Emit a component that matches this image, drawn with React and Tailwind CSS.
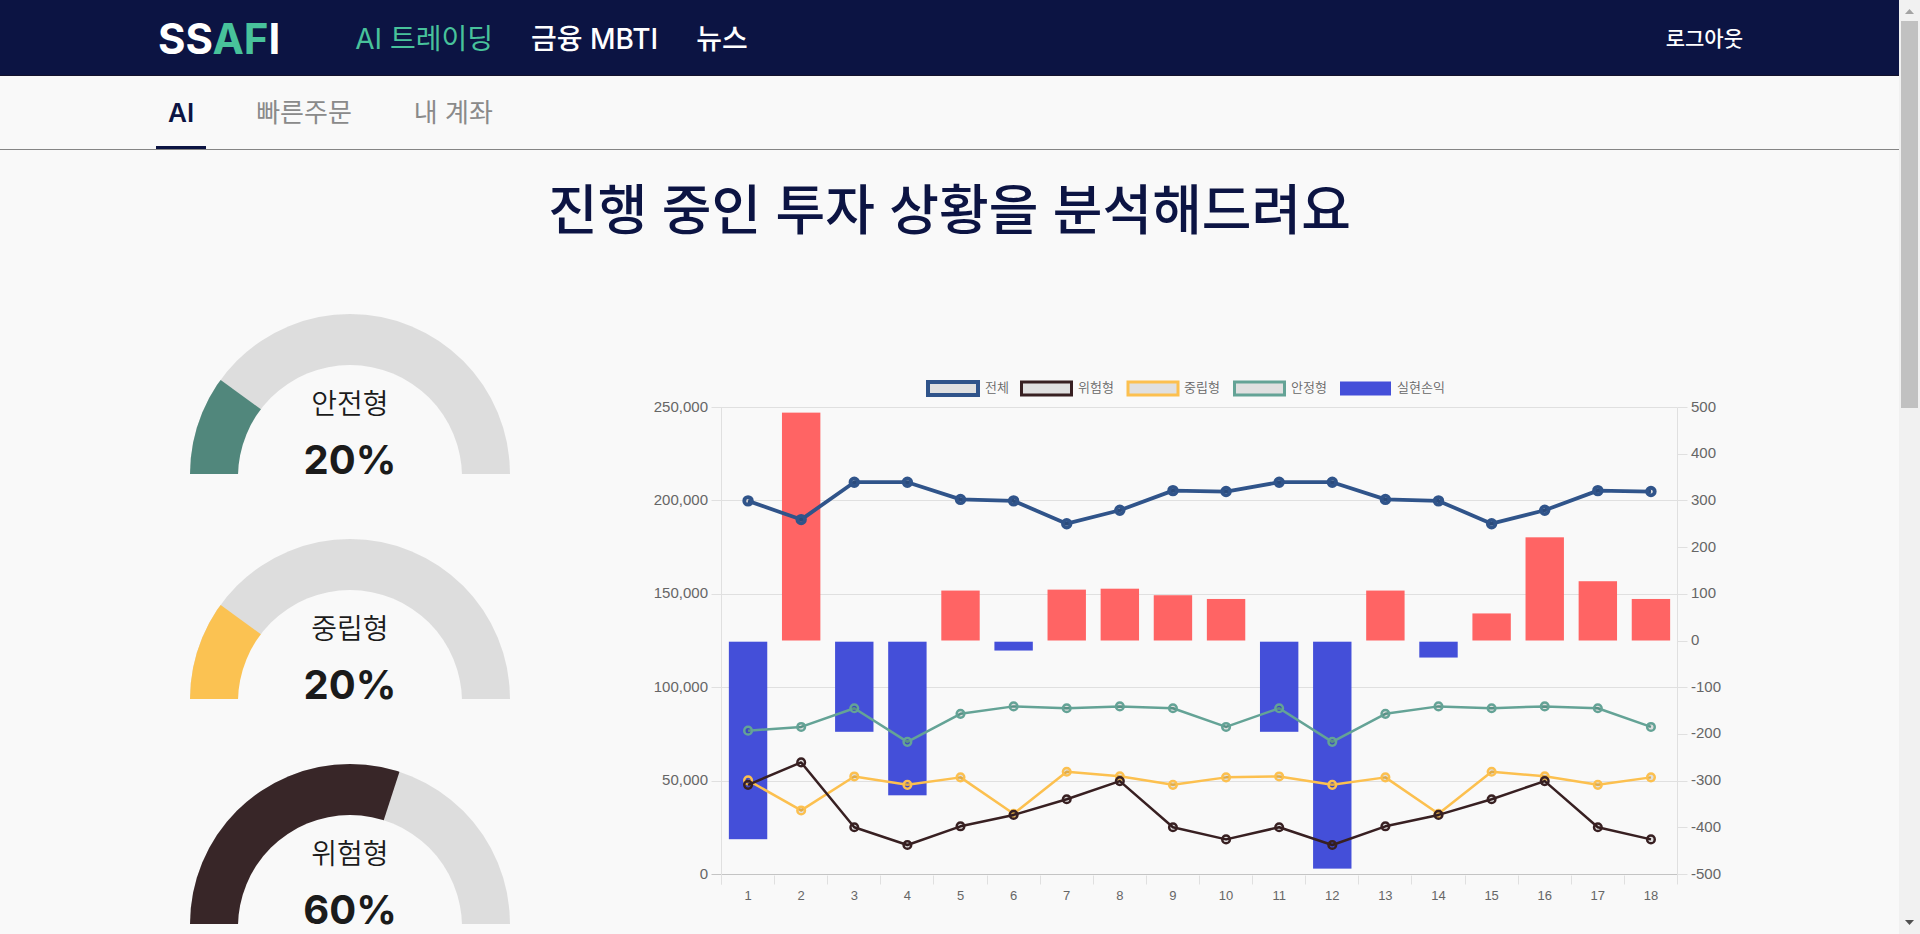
import React from "react";

const NAV = [
  { label: "AI 트레이딩", active: true },
  { label: "금융 MBTI", active: false },
  { label: "뉴스", active: false },
];

const TABS = [
  { label: "AI", active: true },
  { label: "빠른주문", active: false },
  { label: "내 계좌", active: false },
];

const GAUGES = [
  { label: "안전형", percent: 20, color: "#51877c" },
  { label: "중립형", percent: 20, color: "#fbc252" },
  { label: "위험형", percent: 60, color: "#382628" },
];

const LINES = [
  {
    label: "안정형",
    color: "#64a396",
    width: 3,
    data: [77, 79, 89, 71, 86, 90, 89, 90, 89, 79, 89, 71, 86, 90, 89, 90, 89, 79],
  },
  {
    label: "중립형",
    color: "#fcc04f",
    width: 3,
    data: [50.4, 34.3, 52.5, 48, 52, 32.5, 55, 52.6, 48, 52, 52.5, 48, 52, 32.5, 55, 52.6, 48, 52],
  },
  {
    label: "위험형",
    color: "#382022",
    width: 3,
    data: [48, 60, 25.3, 15.8, 25.8, 31.9, 40.3, 50, 25.3, 18.8, 25.3, 15.8, 25.8, 31.9, 40.3, 50, 25.3, 18.8],
  },
  {
    label: "전체",
    color: "#30548a",
    width: 4,
    data: [200, 190, 210, 210, 200.8, 200, 187.8, 195, 205.5, 205, 210, 210, 200.8, 200, 187.8, 195, 205.5, 205],
  },
];

const PROFITS = [-424, 489, -194, -330, 108, -20, 110, 112, 98, 90, -194, -487, 108, -35, 59, 222, 128, 90];

const LEGEND = [
  { label: "전체", x: 288, textX: 345, color: "#30548a", fill: "#e0e0e0", stroke: 4 },
  { label: "위험형", x: 381.5, textX: 438, color: "#382022", fill: "#e0e0e0", stroke: 3 },
  { label: "중립형", x: 488, textX: 544, color: "#fcc04f", fill: "#e0e0e0", stroke: 3 },
  { label: "안정형", x: 594.5, textX: 651, color: "#64a396", fill: "#e0e0e0", stroke: 3 },
  { label: "실현손익", x: 700.5, textX: 757, color: "#444fd9", fill: "#444fd9", stroke: 1 },
];

const PLOT = { left: 81.5, right: 1037.5, top: 37.5, bottom: 504.5 };
const STEP = (PLOT.right - PLOT.left) / 18;
const HEIGHT = PLOT.bottom - PLOT.top;
const ZERO = PLOT.top + HEIGHT / 2;

const xAt = (i) => PLOT.left + STEP * (i + 0.5);
const yAt = (v) => PLOT.bottom - (v / 250) * HEIGHT;
const crisp = (v) => Math.floor(v) + 0.5;

function Gauge({ label, percent, color }) {
  const angle = Math.PI * (1 - percent / 100);
  const x = 160 + 170 * Math.cos(angle);
  const y = 160 - 170 * Math.sin(angle);
  const id = `ring-${label}`;
  return (
    <div className="grid w-[320px] justify-items-center">
      <svg viewBox="0 0 320 160" className="col-start-1 row-start-1 h-40 w-full" aria-hidden="true">
        <clipPath id={id}>
          <path d="M0 160A160 160 0 0 1 320 160Z" />
        </clipPath>
        <g clipPath={`url(#${id})`}>
          <rect width="320" height="160" fill="#dddddd" />
          <path d={`M160 160L-10 160A170 170 0 0 1 ${x} ${y}Z`} fill={color} />
          <circle cx="160" cy="163" r="112" fill="#f9f9f9" />
        </g>
      </svg>
      <div className="col-start-1 row-start-1 flex flex-col items-center pt-[70px] text-[#1b1b1b]">
        <h2 className="text-[28px] leading-[40px] font-[350]">{label}</h2>
        <p className="pt-[22px] text-[40px] leading-[28px] font-bold">{percent}%</p>
      </div>
    </div>
  );
}

function ProfitChart() {
  return (
    <svg
      viewBox="0 0 1103 540"
      className="w-full"
      role="img"
      aria-label="투자 성향별 수익 차트"
      fontFamily='"Liberation Sans", "Noto Sans CJK KR", sans-serif'
      fill="#666666"
    >
      {LEGEND.map((l) => (
        <g key={l.label}>
          <rect x={l.x} y="12" width="50" height="13" fill={l.fill} stroke={l.color} strokeWidth={l.stroke} />
          <text x={l.textX} y="22" fontSize="13" className="font-[350]">
            {l.label}
          </text>
        </g>
      ))}

      {[250, 200, 150, 100, 50, 0].map((v) => (
        <g key={v}>
          <line
            x1={PLOT.left - 10}
            x2={PLOT.right}
            y1={crisp(yAt(v))}
            y2={crisp(yAt(v))}
            stroke={v === 0 ? "#c4c4c4" : "#e0e0e0"}
          />
          <text x="68" y={Math.round(yAt(v) + 4)} fontSize="15" textAnchor="end">
            {v === 0 ? "0" : `${v},000`}
          </text>
        </g>
      ))}

      {[500, 400, 300, 200, 100, 0, -100, -200, -300, -400, -500].map((v) => {
        const y = ZERO - (v / 1000) * HEIGHT;
        return (
          <g key={v}>
            <line x1={PLOT.right} x2={PLOT.right + 10} y1={crisp(y)} y2={crisp(y)} stroke="#e0e0e0" />
            <text x="1051" y={Math.round(y + 4)} fontSize="15">
              {v}
            </text>
          </g>
        );
      })}

      <line x1={PLOT.left} x2={PLOT.left} y1={PLOT.top} y2={PLOT.bottom + 10} stroke="#e0e0e0" />
      <line x1={PLOT.right} x2={PLOT.right} y1={PLOT.top} y2={PLOT.bottom + 10} stroke="#e0e0e0" />

      {PROFITS.map((v, i) => {
        const size = (Math.abs(v) / 1000) * HEIGHT;
        return (
          <g key={i}>
            <line
              x1={crisp(PLOT.left + STEP * i)}
              x2={crisp(PLOT.left + STEP * i)}
              y1={PLOT.bottom + 1}
              y2={PLOT.bottom + 10}
              stroke="#e0e0e0"
            />
            <rect
              x={xAt(i) - 19.2}
              y={v > 0 ? ZERO - size : ZERO + 0.7}
              width="38.4"
              height={size - 0.5}
              fill={v > 0 ? "#ff6464" : "#444fd9"}
            />
            <text x={xAt(i)} y="530" fontSize="13" textAnchor="middle">
              {i + 1}
            </text>
          </g>
        );
      })}

      {LINES.map((line) => (
        <g key={line.label} stroke={line.color} fill="none">
          <polyline
            points={line.data.map((v, i) => `${xAt(i)},${yAt(v)}`).join(" ")}
            strokeWidth={line.width === 4 ? 3.8 : 2.5}
            strokeLinejoin="round"
          />
          {line.data.map((v, i) => (
            <circle
              key={i}
              cx={xAt(i)}
              cy={yAt(v)}
              r="3.8"
              fill="#000000"
              fillOpacity="0.1"
              strokeWidth={line.width === 4 ? 3.8 : 2.5}
            />
          ))}
        </g>
      ))}
    </svg>
  );
}

export default function App() {
  return (
    <div className="flex h-screen overflow-hidden bg-[#f9f9f9] font-['Inter','Noto_Sans_CJK_KR',sans-serif]">
      <div className="min-w-0 flex-1">
        <header className="flex h-[76px] items-center border-b border-[#14122c] bg-[#0c1443] px-[156px] pt-0.5 text-white">
          <a href="#home" className="pl-0.5 text-[42px] leading-[48px] font-bold">
            SS<span className="text-[#48c29b]">AF</span>I
          </a>
          <nav className="flex flex-1 gap-[38px] pl-[75px]">
            {NAV.map((n) => (
              <a
                key={n.label}
                href="#nav"
                className={
                  n.active
                    ? "text-[28px] leading-[40px] text-[#48c29b]"
                    : "text-[28px] leading-[40px] font-medium"
                }
              >
                {n.label}
              </a>
            ))}
          </nav>
          <button type="button" className="text-[21px] leading-[28px] font-medium">
            로그아웃
          </button>
        </header>

        <nav className="flex h-[74px] gap-[38px] border-b border-[#858585] px-[156px]">
          {TABS.map((t) => (
            <a
              key={t.label}
              href="#tab"
              className={
                t.active
                  ? "flex items-center border-b-3 border-[#0c1443] px-3 pt-[3px] text-[26px] leading-[36px] font-semibold text-[#0c1443]"
                  : "flex items-center border-b-3 border-transparent px-3 pt-[3px] text-[26px] leading-[36px] text-[#8a8a8a]"
              }
            >
              {t.label}
            </a>
          ))}
        </nav>

        <main>
          <h1 className="pt-[22px] text-center text-[54px] leading-[78px] font-medium text-[#0c1443]">
            진행 중인 투자 상황을 분석해드려요
          </h1>
          <div className="flex gap-24 px-[156px] pt-16">
            <section className="flex w-[388px] shrink-0 flex-col items-center gap-[65px]">
              {GAUGES.map((g) => (
                <Gauge key={g.label} {...g} />
              ))}
            </section>
            <section className="min-w-0 flex-1 pt-14">
              <ProfitChart />
            </section>
          </div>
        </main>
      </div>

      <div className="flex w-[21px] shrink-0 flex-col items-center bg-[#f1f1f1]" aria-hidden="true">
        <svg viewBox="0 0 21 21" className="size-[21px]">
          <path d="M6 14L10.500 9L15 14Z" fill="#a3a3a3" />
        </svg>
        <div className="h-[387px] w-[17px] bg-[#c1c1c1]" />
        <div className="flex-1" />
        <svg viewBox="0 0 21 21" className="size-[21px]">
          <path d="M6 7L10.500 12L15 7Z" fill="#505050" />
        </svg>
      </div>
    </div>
  );
}
